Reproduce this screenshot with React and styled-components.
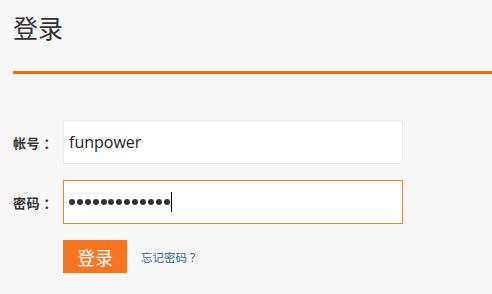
import React from "react";
import styled, { createGlobalStyle } from "styled-components";

const GlobalStyle = createGlobalStyle`
  html, body {
    margin: 0;
    padding: 0;
    background: #f7f7f7;
    font-family: "Open Sans", "Noto Sans CJK SC", sans-serif;
    color: #333;
  }
`;

const Page = styled.div`
  padding: 11px 0 0 13px;
`;

const Title = styled.h1`
  margin: 0;
  font-size: 25px;
  font-weight: normal;
  line-height: 32px;
  color: #333;
  font-family: "Noto Sans CJK SC", sans-serif;
`;

const Divider = styled.div`
  height: 3px;
  background: #ff6a00;
  margin-top: 28px;
`;

const Form = styled.form`
  display: flex;
  flex-direction: column;
  gap: 16px;
  margin-top: 46px;
`;

const Row = styled.div`
  display: flex;
  align-items: center;
`;

const Label = styled.label`
  width: 50px;
  font-size: 13px;
  font-weight: bold;
  letter-spacing: 0.5px;
  color: #333;
  font-family: "Noto Sans CJK SC", sans-serif;
`;

const Field = styled.div`
  box-sizing: border-box;
  width: 340px;
  height: 44px;
  display: flex;
  align-items: center;
  padding: 0 5px;
  background: #fff;
  border: 1px solid ${(p) => (p.$active ? "#fb8221" : "#ebebeb")};
  font-size: 16px;
  color: #222;
`;

const Dots = styled.div`
  display: flex;
  gap: 1.9px;
`;

const Dot = styled.span`
  width: 6px;
  height: 6px;
  border-radius: 50%;
  background: #333;
`;

const Caret = styled.span`
  width: 1px;
  height: 20px;
  background: #000;
  margin-left: 1px;
`;

const Actions = styled.div`
  display: flex;
  align-items: center;
  gap: 14px;
  margin: 0 0 0 50px;
`;

const Submit = styled.button`
  width: 64px;
  height: 33px;
  border: none;
  background: #fb7520;
  color: #fff;
  font-size: 18px;
  font-family: "Noto Sans CJK SC", sans-serif;
  padding: 0;
  cursor: pointer;
`;

const Forgot = styled.a`
  font-size: 11.5px;
  color: #336699;
  text-decoration: none;
  font-family: "Noto Sans CJK SC", sans-serif;
  cursor: pointer;
`;

export default function App() {
  return (
    <Page>
      <GlobalStyle />
      <Title>登录</Title>
      <Divider />
      <Form onSubmit={(e) => e.preventDefault()}>
        <Row>
          <Label>帐号 ：</Label>
          <Field>funpower</Field>
        </Row>
        <Row>
          <Label>密码 ：</Label>
          <Field $active>
            <Dots>
              {Array.from({ length: 13 }).map((_, i) => (
                <Dot key={i} />
              ))}
            </Dots>
            <Caret />
          </Field>
        </Row>
        <Actions>
          <Submit>登录</Submit>
          <Forgot>忘记密码 ？</Forgot>
        </Actions>
      </Form>
    </Page>
  );
}
